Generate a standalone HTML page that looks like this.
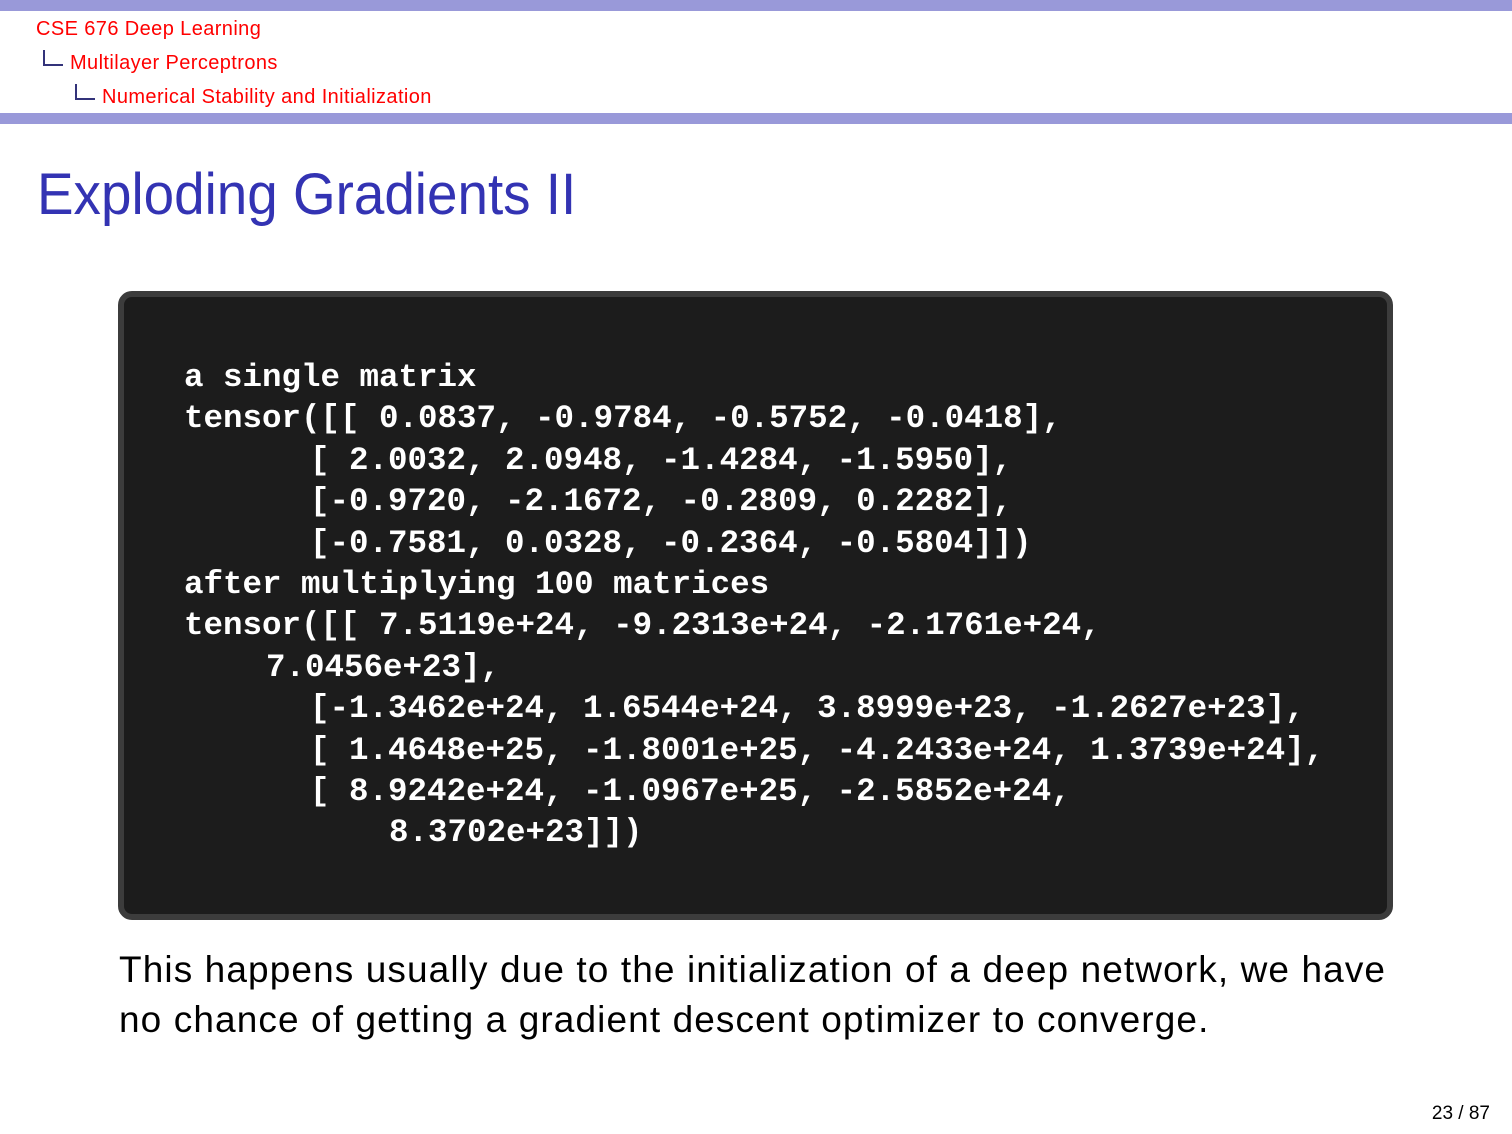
<!DOCTYPE html>
<html><head><meta charset="utf-8"><style>
html,body{margin:0;padding:0;width:1512px;height:1134px;background:#fff;overflow:hidden;position:relative;font-family:"Liberation Sans",sans-serif}
.bar{position:absolute;left:0;width:1512px;background:#9999d9}
.bc{position:absolute;color:#f00;font-size:20px;letter-spacing:0.4px;white-space:nowrap}
.el{position:absolute;border-left:2px solid #33337a;border-bottom:2px solid #33337a;width:18px;height:14px}
.title{position:absolute;left:37px;top:161px;color:#3333b3;font-size:58px;white-space:nowrap;transform:scaleX(.945);transform-origin:left top}
.box{position:absolute;left:118px;top:291px;width:1263px;height:617px;background:#1c1c1c;border:6px solid #3c3c3c;border-radius:14px}
pre{position:absolute;left:184px;top:357px;margin:0;color:#fff;font-family:"Liberation Mono",monospace;font-weight:bold;font-size:32.5px;line-height:41.4px}
pre span{display:inline-block}
.txt{position:absolute;left:119px;top:945px;font-size:37px;letter-spacing:1.1px;line-height:50px;color:#000;white-space:nowrap}
.pg{position:absolute;right:22px;top:1103px;font-size:19px;color:#000}
</style></head><body>
<div class="bar" style="top:0;height:11px"></div>
<div class="bc" style="left:36px;top:18px">CSE 676 Deep Learning</div>
<div class="el" style="left:43px;top:50px"></div>
<div class="bc" style="left:70px;top:52px">Multilayer Perceptrons</div>
<div class="el" style="left:75px;top:84px"></div>
<div class="bc" style="left:102px;top:86px">Numerical Stability and Initialization</div>
<div class="bar" style="top:113px;height:11px"></div>
<div class="title">Exploding Gradients II</div>
<div class="box"></div>
<pre>a single matrix
tensor([[ 0.0837, -0.9784, -0.5752, -0.0418],
<span style="width:126px"></span>[ 2.0032, 2.0948, -1.4284, -1.5950],
<span style="width:126px"></span>[-0.9720, -2.1672, -0.2809, 0.2282],
<span style="width:126px"></span>[-0.7581, 0.0328, -0.2364, -0.5804]])
after multiplying 100 matrices
tensor([[ 7.5119e+24, -9.2313e+24, -2.1761e+24,
<span style="width:82px"></span>7.0456e+23],
<span style="width:126px"></span>[-1.3462e+24, 1.6544e+24, 3.8999e+23, -1.2627e+23],
<span style="width:126px"></span>[ 1.4648e+25, -1.8001e+25, -4.2433e+24, 1.3739e+24],
<span style="width:126px"></span>[ 8.9242e+24, -1.0967e+25, -2.5852e+24,
<span style="width:205px"></span>8.3702e+23]])</pre>
<div class="txt">This happens usually due to the initialization of a deep network, we have<br>no chance of getting a gradient descent optimizer to converge.</div>
<div class="pg">23 / 87</div>
</body></html>
